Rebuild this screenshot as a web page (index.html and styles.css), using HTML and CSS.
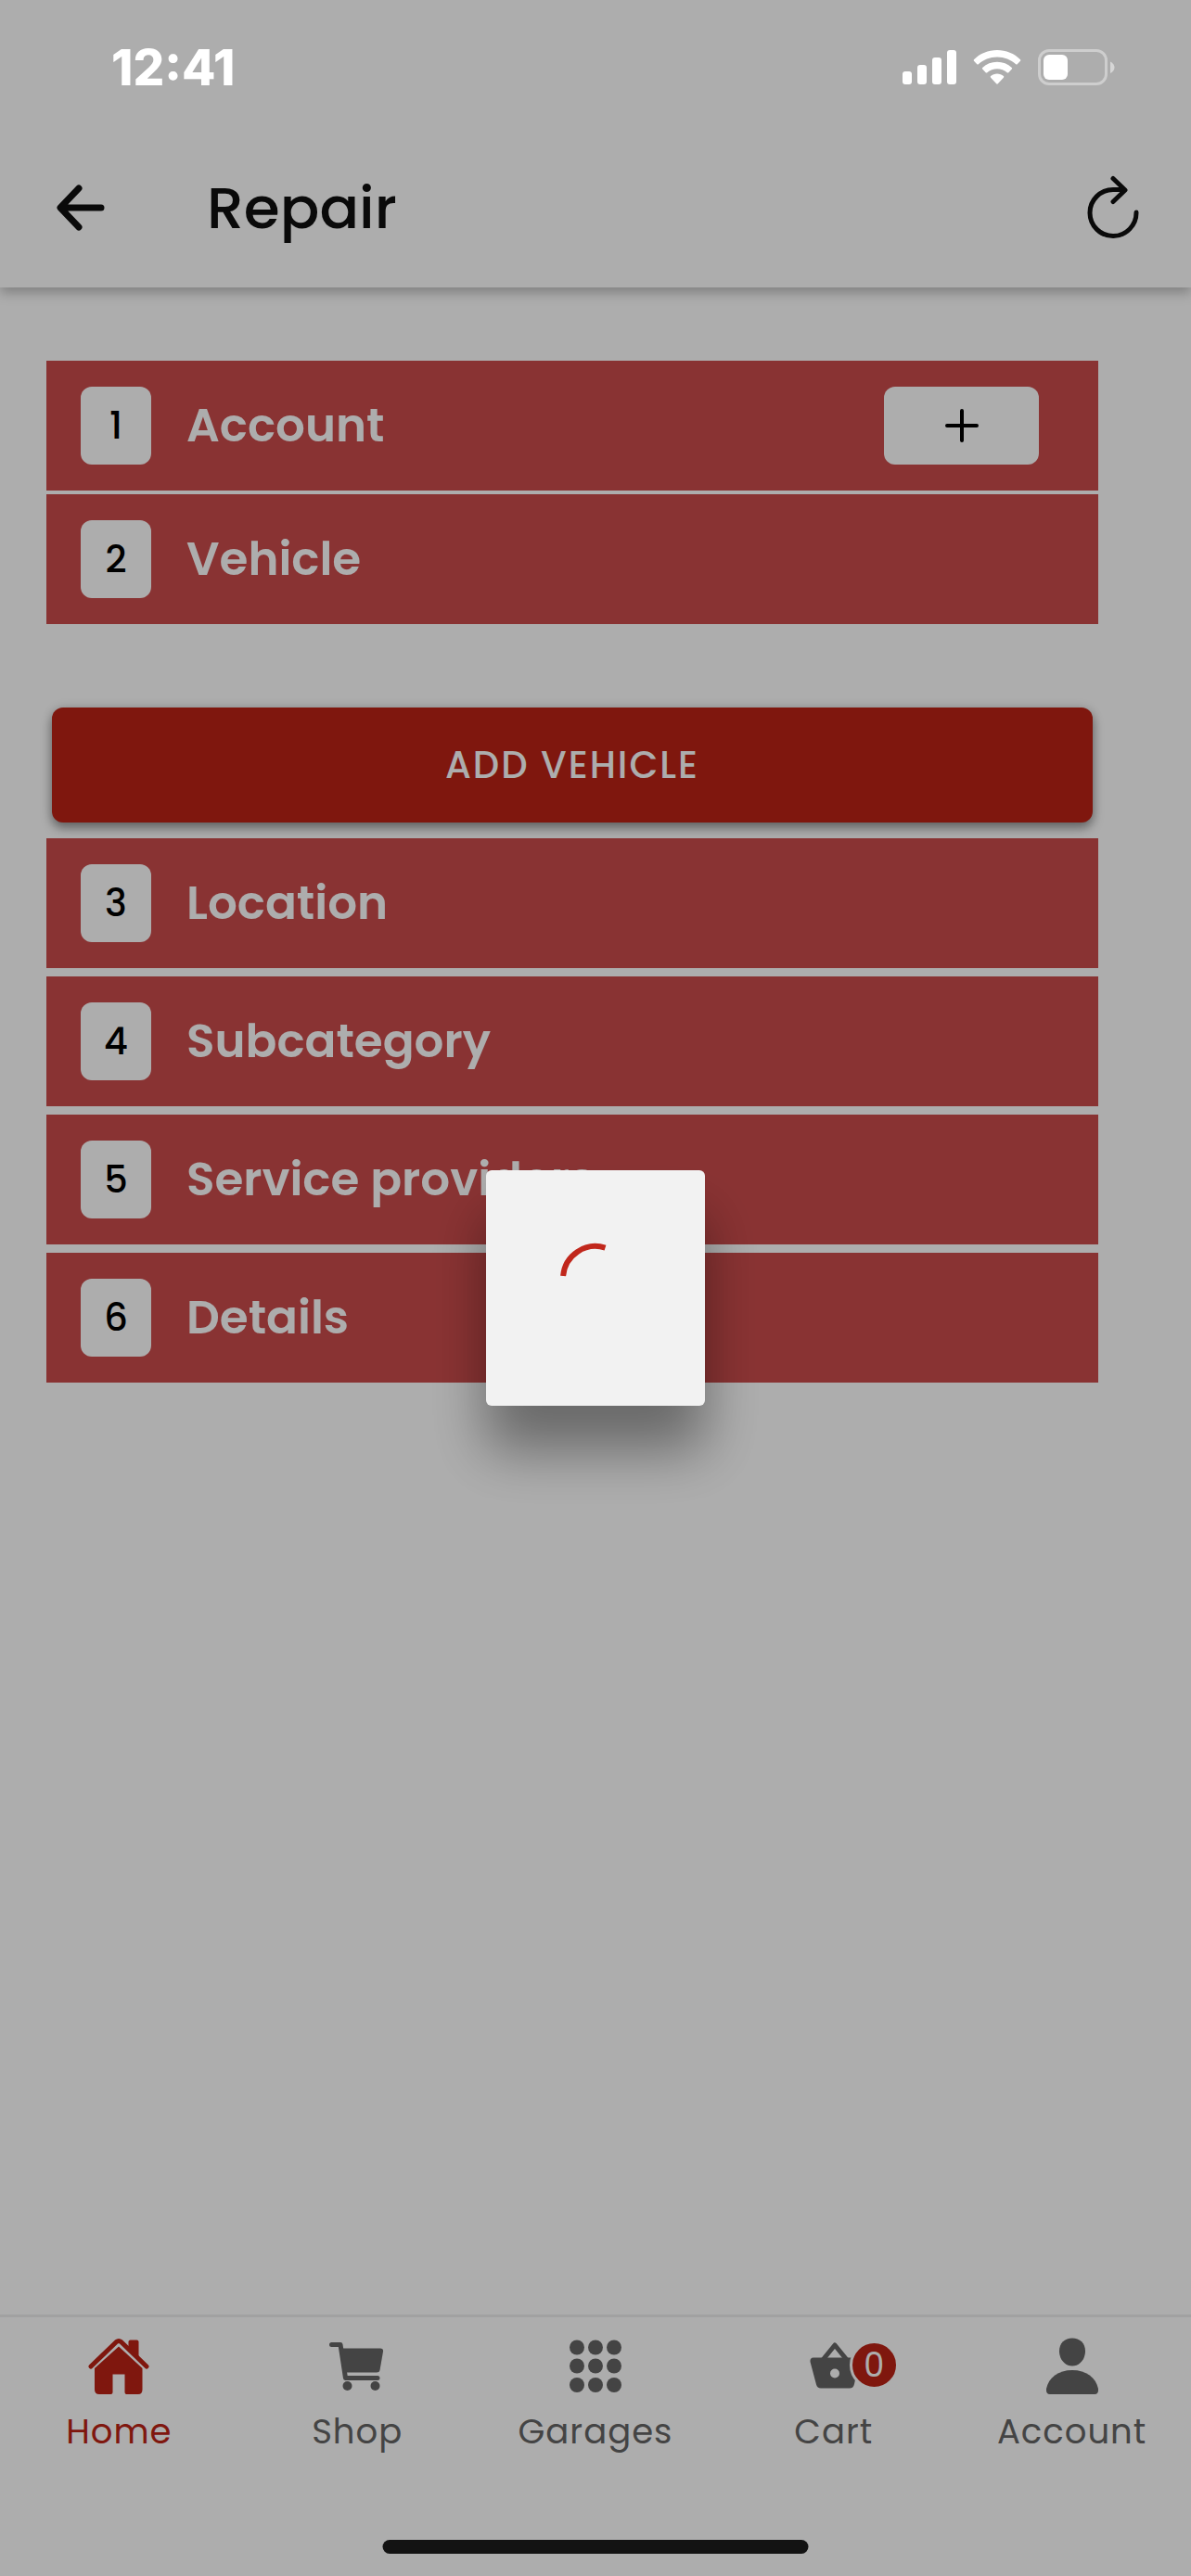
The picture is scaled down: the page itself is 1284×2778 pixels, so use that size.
FILE: index.html
```html
<!DOCTYPE html>
<html lang="en">
<head>
<meta charset="utf-8">
<meta name="viewport" content="width=device-width, initial-scale=1">
<title>Repair</title>
<link rel="stylesheet" href="styles.css">
</head>
<body>
<div class="status-bar">
  <span class="clock">12:41</span>
  <div class="status-icons">
    <svg width="58" height="38" viewBox="0 0 58 38" fill="#fff" aria-hidden="true">
      <rect x="0" y="23" width="10" height="14" rx="3"/><rect x="16" y="16" width="10" height="21" rx="3"/><rect x="32" y="8" width="10" height="29" rx="3"/><rect x="48" y="0" width="10" height="37" rx="3"/>
    </svg>
    <svg width="52" height="38" viewBox="0 0 52 38" fill="#fff" aria-hidden="true">
      <path d="M26 0C35.500 0 44.500 3.700 51 10.200Q51.800 11 51 11.800L47.700 15.200Q47 15.900 46.200 15.200C40.800 10.200 33.800 7.400 26 7.400S11.200 10.200 5.800 15.200Q5 15.900 4.300 15.200L1 11.800Q.2 11 1 10.200C7.500 3.700 16.500 0 26 0Z"/>
      <path d="M26 12.800C32 12.800 37.500 15 41.800 18.900Q42.600 19.700 41.800 20.500L38.300 24.200Q37.500 24.900 36.700 24.200C33.800 21.700 30 20.200 26 20.200S18.200 21.700 15.300 24.200Q14.500 24.900 13.700 24.200L10.200 20.500Q9.400 19.700 10.200 18.900C14.500 15 20 12.800 26 12.800Z"/>
      <path d="M26 25.500C28.600 25.500 31 26.400 32.900 28.100Q33.700 28.800 32.900 29.700L26.800 36.300Q26 37.100 25.200 36.300L19.100 29.700Q18.300 28.800 19.100 28.100C21 26.400 23.400 25.500 26 25.500Z"/>
    </svg>
    <svg width="83" height="40" viewBox="0 0 83 40" fill="#fff" aria-hidden="true">
      <rect x="1.500" y="1.500" width="72" height="36" rx="10.500" fill="none" stroke="#fff" stroke-opacity=".4" stroke-width="3"/>
      <rect x="6" y="6" width="26" height="27" rx="6"/>
      <path d="M78 13.500C84 16 84 23.500 78 26Z" fill-opacity=".5"/>
    </svg>
  </div>
</div>

<header class="toolbar">
  <button class="icon-button" type="button" aria-label="Back">
    <svg width="72" height="72" viewBox="0 0 72 72" fill="none" stroke="currentColor" stroke-width="7" stroke-linecap="round" stroke-linejoin="round"><path d="M34 15 14 36 34 57M15 36H58"/></svg>
  </button>
  <h1 class="title">Repair</h1>
  <button class="icon-button" type="button" aria-label="Refresh">
    <svg width="72" height="72" viewBox="0 0 72 72" fill="none" stroke="currentColor" stroke-width="5" stroke-linecap="round" stroke-linejoin="round"><path d="M61 41A25 25 0 1 1 36 16.500H48M36 4.500 49 17 36 29.500"/></svg>
  </button>
</header>

<main class="content">
  <section class="step"><span class="number">1</span><h2 class="label">Account</h2>
    <button class="add-button" type="button" aria-label="Add account">
      <svg width="48" height="48" viewBox="0 0 48 48" fill="none" stroke="currentColor" stroke-width="4" stroke-linecap="round"><path d="M24 8V40M8 24H40"/></svg>
    </button>
  </section>
  <section class="step vehicle-step"><span class="number">2</span><h2 class="label">Vehicle</h2></section>
  <button class="primary-button" type="button">ADD VEHICLE</button>
  <div class="steps">
    <section class="step"><span class="number">3</span><h2 class="label">Location</h2></section>
    <section class="step"><span class="number">4</span><h2 class="label">Subcategory</h2></section>
    <section class="step"><span class="number">5</span><h2 class="label">Service providers</h2></section>
    <section class="step"><span class="number">6</span><h2 class="label">Details</h2></section>
  </div>
</main>

<nav class="tabs">
  <a class="tab active" href="#home">
    <svg width="72" height="72" viewBox="0 0 72 72" fill="currentColor" aria-hidden="true">
      <path d="M36 15.500 61.500 39V62Q61.500 67 57 67H44.500Q42.500 67 42.500 65V45.500H29.500V65Q29.500 67 27.500 67H15Q10 67 10 62V39Z"/>
      <path d="M6 37 33.500 10.500Q36 8.500 38.500 10.500L66 37" fill="none" stroke="currentColor" stroke-width="5" stroke-linecap="round" stroke-linejoin="round"/>
      <path d="M46.500 16V10.500Q46.500 8.500 48.500 8.500H55.500Q57.500 8.500 57.500 10.500V27Z"/>
    </svg>
    <span>Home</span>
  </a>
  <a class="tab" href="#shop">
    <svg width="72" height="72" viewBox="0 0 72 72" fill="currentColor" aria-hidden="true">
      <path d="M8.500 13.500H18L23.500 49.500H58" fill="none" stroke="currentColor" stroke-width="5" stroke-linecap="round" stroke-linejoin="round"/>
      <path d="M18 17.500H61Q64.500 17.500 64 21L60.500 41Q60 43.500 57 43.500H22Z"/>
      <circle cx="25.500" cy="58" r="5"/><circle cx="55.500" cy="58" r="5"/>
    </svg>
    <span>Shop</span>
  </a>
  <a class="tab" href="#garages">
    <svg width="72" height="72" viewBox="0 0 72 72" fill="currentColor" aria-hidden="true">
      <circle cx="16" cy="16.500" r="8"/><circle cx="36" cy="16.500" r="8"/><circle cx="56" cy="16.500" r="8"/>
      <circle cx="16" cy="36.500" r="8"/><circle cx="36" cy="36.500" r="8"/><circle cx="56" cy="36.500" r="8"/>
      <circle cx="16" cy="57" r="8"/><circle cx="36" cy="57" r="8"/><circle cx="56" cy="57" r="8"/>
    </svg>
    <span>Garages</span>
  </a>
  <a class="tab" href="#cart">
    <span class="badged">
      <svg width="72" height="72" viewBox="0 0 72 72" fill="currentColor" aria-hidden="true">
        <path d="M24 30 37 14 50 30" fill="none" stroke="currentColor" stroke-width="5" stroke-linejoin="round"/>
        <path fill-rule="evenodd" d="M14 27.500H60Q64 27.500 63 32L58 56Q57 60.500 53 60.500H22Q18 60.500 17 56.500L10.500 32Q10 27.500 14 27.500ZM37 39.500A5 5 0 1 0 37 49.500 5 5 0 1 0 37 39.500Z"/>
      </svg>
      <span class="badge">0</span>
    </span>
    <span>Cart</span>
  </a>
  <a class="tab" href="#account">
    <svg width="72" height="72" viewBox="0 0 72 72" fill="currentColor" aria-hidden="true">
      <path d="M36 6.500C44.500 6.500 50.500 12.500 50 21.500 49.500 30 43.500 36.500 36 36.500S22.500 30 22 21.500C21.500 12.500 27.500 6.500 36 6.500Z"/>
      <path d="M36 41C51 41 61.500 49 64 61Q64.500 67 60 67H12Q7.500 67 8 61C10.500 49 21 41 36 41Z"/>
    </svg>
    <span>Account</span>
  </a>
</nav>

<div class="backdrop">
  <div class="loading" role="alertdialog" aria-label="Loading">
    <svg width="84" height="84" viewBox="0 0 84 84" fill="none" stroke="#c1271c" stroke-width="6" aria-hidden="true"><path d="M7.100 39A35 35 0 0 1 52.500 8.600"/></svg>
  </div>
</div>
<div class="home-indicator"></div>
</body>
</html>
```
FILE: styles.css
```css
* { box-sizing: border-box; }

body {
  margin: 0;
  min-height: 100vh;
  display: flex;
  flex-direction: column;
  background: #fff;
  color: #101010;
  font-family: Poppins, Inter, sans-serif;
}

button {
  margin: 0;
  padding: 0;
  border: 0;
  background: none;
  color: inherit;
  font: inherit;
}

svg { display: block; flex: none; }

.status-bar {
  position: relative;
  z-index: 3;
  display: flex;
  justify-content: space-between;
  align-items: center;
  height: 138px;
  padding: 8px 82px 0 120px;
  color: #fff;
}

.clock { font: 800 53px/60px Inter, sans-serif; }

.status-icons { display: flex; align-items: center; gap: 18px; }

.toolbar {
  display: flex;
  align-items: center;
  height: 172px;
  padding: 0 48px 0 51px;
  box-shadow: 0 6px 12px rgba(0, 0, 0, .25);
  clip-path: inset(0 0 -24px);
}

.title {
  flex: 1;
  margin: 0 0 0 100px;
  font-size: 63px;
  line-height: 80px;
  font-weight: 500;
}

.content {
  flex: 1;
  padding: 79px 100px 40px 50px;
}

.step {
  display: flex;
  align-items: center;
  height: 140px;
  padding: 0 64px 0 37px;
  background: #cb4c4c;
  color: #fff;
}

.vehicle-step { margin-top: 4px; }

.number {
  width: 76px;
  border-radius: 12px;
  background: #fff;
  color: #000;
  font-size: 40px;
  line-height: 84px;
  font-weight: 500;
  text-align: center;
}

.label {
  flex: 1;
  margin: 0 0 0 38px;
  font-size: 50px;
  line-height: 60px;
  font-weight: 600;
}

.add-button {
  display: flex;
  align-items: center;
  justify-content: center;
  width: 167px;
  height: 84px;
  border-radius: 12px;
  background: #fff;
  color: #000;
}

.primary-button {
  display: block;
  width: calc(100% - 12px);
  height: 124px;
  margin: 90px 6px 17px;
  border-radius: 12px;
  background: #bb2215;
  box-shadow: 0 6px 12px rgba(0, 0, 0, .4), 0 0 12px rgba(0, 0, 0, .12);
  color: #fff;
  font-size: 40px;
  font-weight: 500;
  letter-spacing: 2px;
}

.steps { display: grid; gap: 9px; }

.tabs {
  display: grid;
  grid-template-columns: repeat(5, 1fr);
  padding: 16px 0 132px;
  border-top: 3px solid #ededed;
}

.tab {
  display: flex;
  flex-direction: column;
  align-items: center;
  gap: 11px;
  color: #656565;
  font-size: 37px;
  line-height: 48px;
  letter-spacing: 1px;
  text-decoration: none;
}

.active { color: #bb2215; }

.badged { position: relative; }

.badge {
  position: absolute;
  top: 9px;
  left: 53px;
  width: 53px;
  border: 3px solid #fff;
  border-radius: 50%;
  background: #bb2215;
  color: #fff;
  font-size: 35px;
  line-height: 47px;
  letter-spacing: 0;
  text-align: center;
}

.backdrop {
  position: fixed;
  inset: 0;
  z-index: 2;
  display: flex;
  align-items: center;
  justify-content: center;
  background: rgba(0, 0, 0, .32);
}

.loading {
  display: flex;
  justify-content: center;
  width: 236px;
  height: 254px;
  padding-top: 75px;
  border-radius: 6px;
  background: #f2f2f2;
  box-shadow: 0 48px 60px rgba(0, 0, 0, .4);
}

.home-indicator {
  position: fixed;
  bottom: 24px;
  left: 50%;
  z-index: 3;
  width: 459px;
  height: 15px;
  border-radius: 8px;
  background: #131313;
  transform: translateX(-50%);
}
```
